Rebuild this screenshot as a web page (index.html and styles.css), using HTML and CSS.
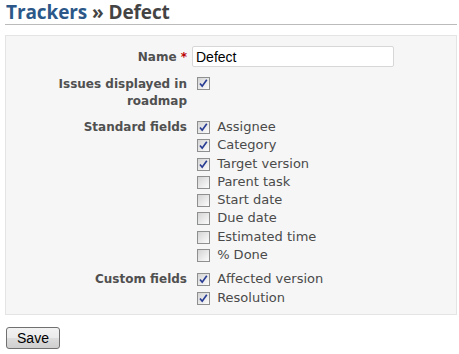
FILE: index.html
```html
<!DOCTYPE html>
<html lang="en">
<head>
  <meta charset="UTF-8">
  <title>Trackers » Defect</title>
  <link rel="stylesheet" href="styles.css">
</head>
<body>
  <h2 class="title"><a href="#">Trackers</a> » Defect</h2>

  <form class="tracker-form">
    <div class="box tabular">
      <div class="row row-name">
        <label class="field-label" for="name">Name <span class="required">*</span></label>
        <div class="field">
          <input type="text" id="name" class="text-input" value="Defect">
        </div>
      </div>

      <div class="row row-roadmap">
        <label class="field-label" for="roadmap">Issues displayed in roadmap</label>
        <div class="field">
          <input type="checkbox" id="roadmap" class="check" checked>
        </div>
      </div>

      <div class="row row-standard">
        <span class="field-label">Standard fields</span>
        <div class="field list">
          <label class="block"><input type="checkbox" class="check" checked> Assignee</label>
          <label class="block"><input type="checkbox" class="check" checked> Category</label>
          <label class="block"><input type="checkbox" class="check" checked> Target version</label>
          <label class="block"><input type="checkbox" class="check"> Parent task</label>
          <label class="block"><input type="checkbox" class="check"> Start date</label>
          <label class="block"><input type="checkbox" class="check"> Due date</label>
          <label class="block"><input type="checkbox" class="check"> Estimated time</label>
          <label class="block"><input type="checkbox" class="check"> % Done</label>
        </div>
      </div>

      <div class="row">
        <span class="field-label">Custom fields</span>
        <div class="field list">
          <label class="block"><input type="checkbox" class="check" checked> Affected version</label>
          <label class="block"><input type="checkbox" class="check" checked> Resolution</label>
        </div>
      </div>
    </div>

    <button type="submit" class="save-btn">Save</button>
  </form>
</body>
</html>
```

FILE: styles.css
```css
body {
  margin: 0;
  padding: 0 2px 0 5px;
  background: #fff;
  color: #4a4a4a;
  font-family: "DejaVu Sans", Verdana, sans-serif;
  font-size: 13px;
}
.title {
  margin: 0;
  padding: 1px 0 0 1px;
  height: 23px;
  line-height: 22px;
  border-bottom: 1px solid #bbb;
  font-family: "Open Sans", "Trebuchet MS", sans-serif;
  font-size: 19px;
  font-weight: bold;
  color: #444;
  letter-spacing: -0.1px;
}
.title a {
  color: #2b5889;
  text-decoration: none;
}
.tracker-form {
  margin-top: 10px;
}
.box {
  background: #f6f6f6;
  border: 1px solid #e4e4e4;
  padding: 7px 0 4px;
}
.row {
  display: grid;
  grid-template-columns: 183px 1fr;
  column-gap: 3px;
  padding: 3px 0;
}
.row-roadmap,
.row-standard {
  margin-top: 2px;
}
.field-label {
  text-align: right;
  font-size: 12px;
  font-weight: bold;
  line-height: 17px;
  padding: 1px 2px 0 0;
  color: #505050;
}
.row-name .field-label {
  padding-top: 3px;
}
.required {
  color: #bb0000;
}
.text-input {
  box-sizing: border-box;
  width: 202px;
  height: 21px;
  margin: 0;
  padding: 1px 3px;
  border: 1px solid #d7d7d7;
  border-radius: 2px;
  font-family: "Liberation Sans", Arial, sans-serif;
  font-size: 14px;
  color: #000;
  background: #fff;
}
.check {
  -webkit-appearance: none;
  appearance: none;
  box-sizing: border-box;
  width: 13px;
  height: 13px;
  margin: 2px 3px 0 5px;
  vertical-align: top;
  border: 1px solid #8e8f8f;
  background: linear-gradient(135deg, #d4d4d4, #f4f4f4 80%, #fbfbfb);
}
.check:checked {
  background:
    url("data:image/svg+xml,%3Csvg xmlns='http://www.w3.org/2000/svg' width='11' height='11'%3E%3Cpath d='M2 5.5 L4.2 8.2 L8.8 1.8' fill='none' stroke='%23283c94' stroke-width='1.7'/%3E%3C/svg%3E") no-repeat center,
    linear-gradient(135deg, #d4d4d4, #f4f4f4 80%, #fbfbfb);
}
.block {
  display: block;
  height: 18.3px;
  line-height: 18px;
  white-space: nowrap;
}
.block .check {
  margin-top: 3px;
}
.save-btn {
  display: block;
  margin: 12px 0 0 1px;
  width: 54px;
  height: 22px;
  padding: 0;
  border: 1px solid #707070;
  border-radius: 3px;
  background: linear-gradient(#f2f2f2, #ebebeb 50%, #dddddd 50%, #cfcfcf);
  font-family: "Liberation Sans", Arial, sans-serif;
  font-size: 14px;
  color: #000;
}
```
